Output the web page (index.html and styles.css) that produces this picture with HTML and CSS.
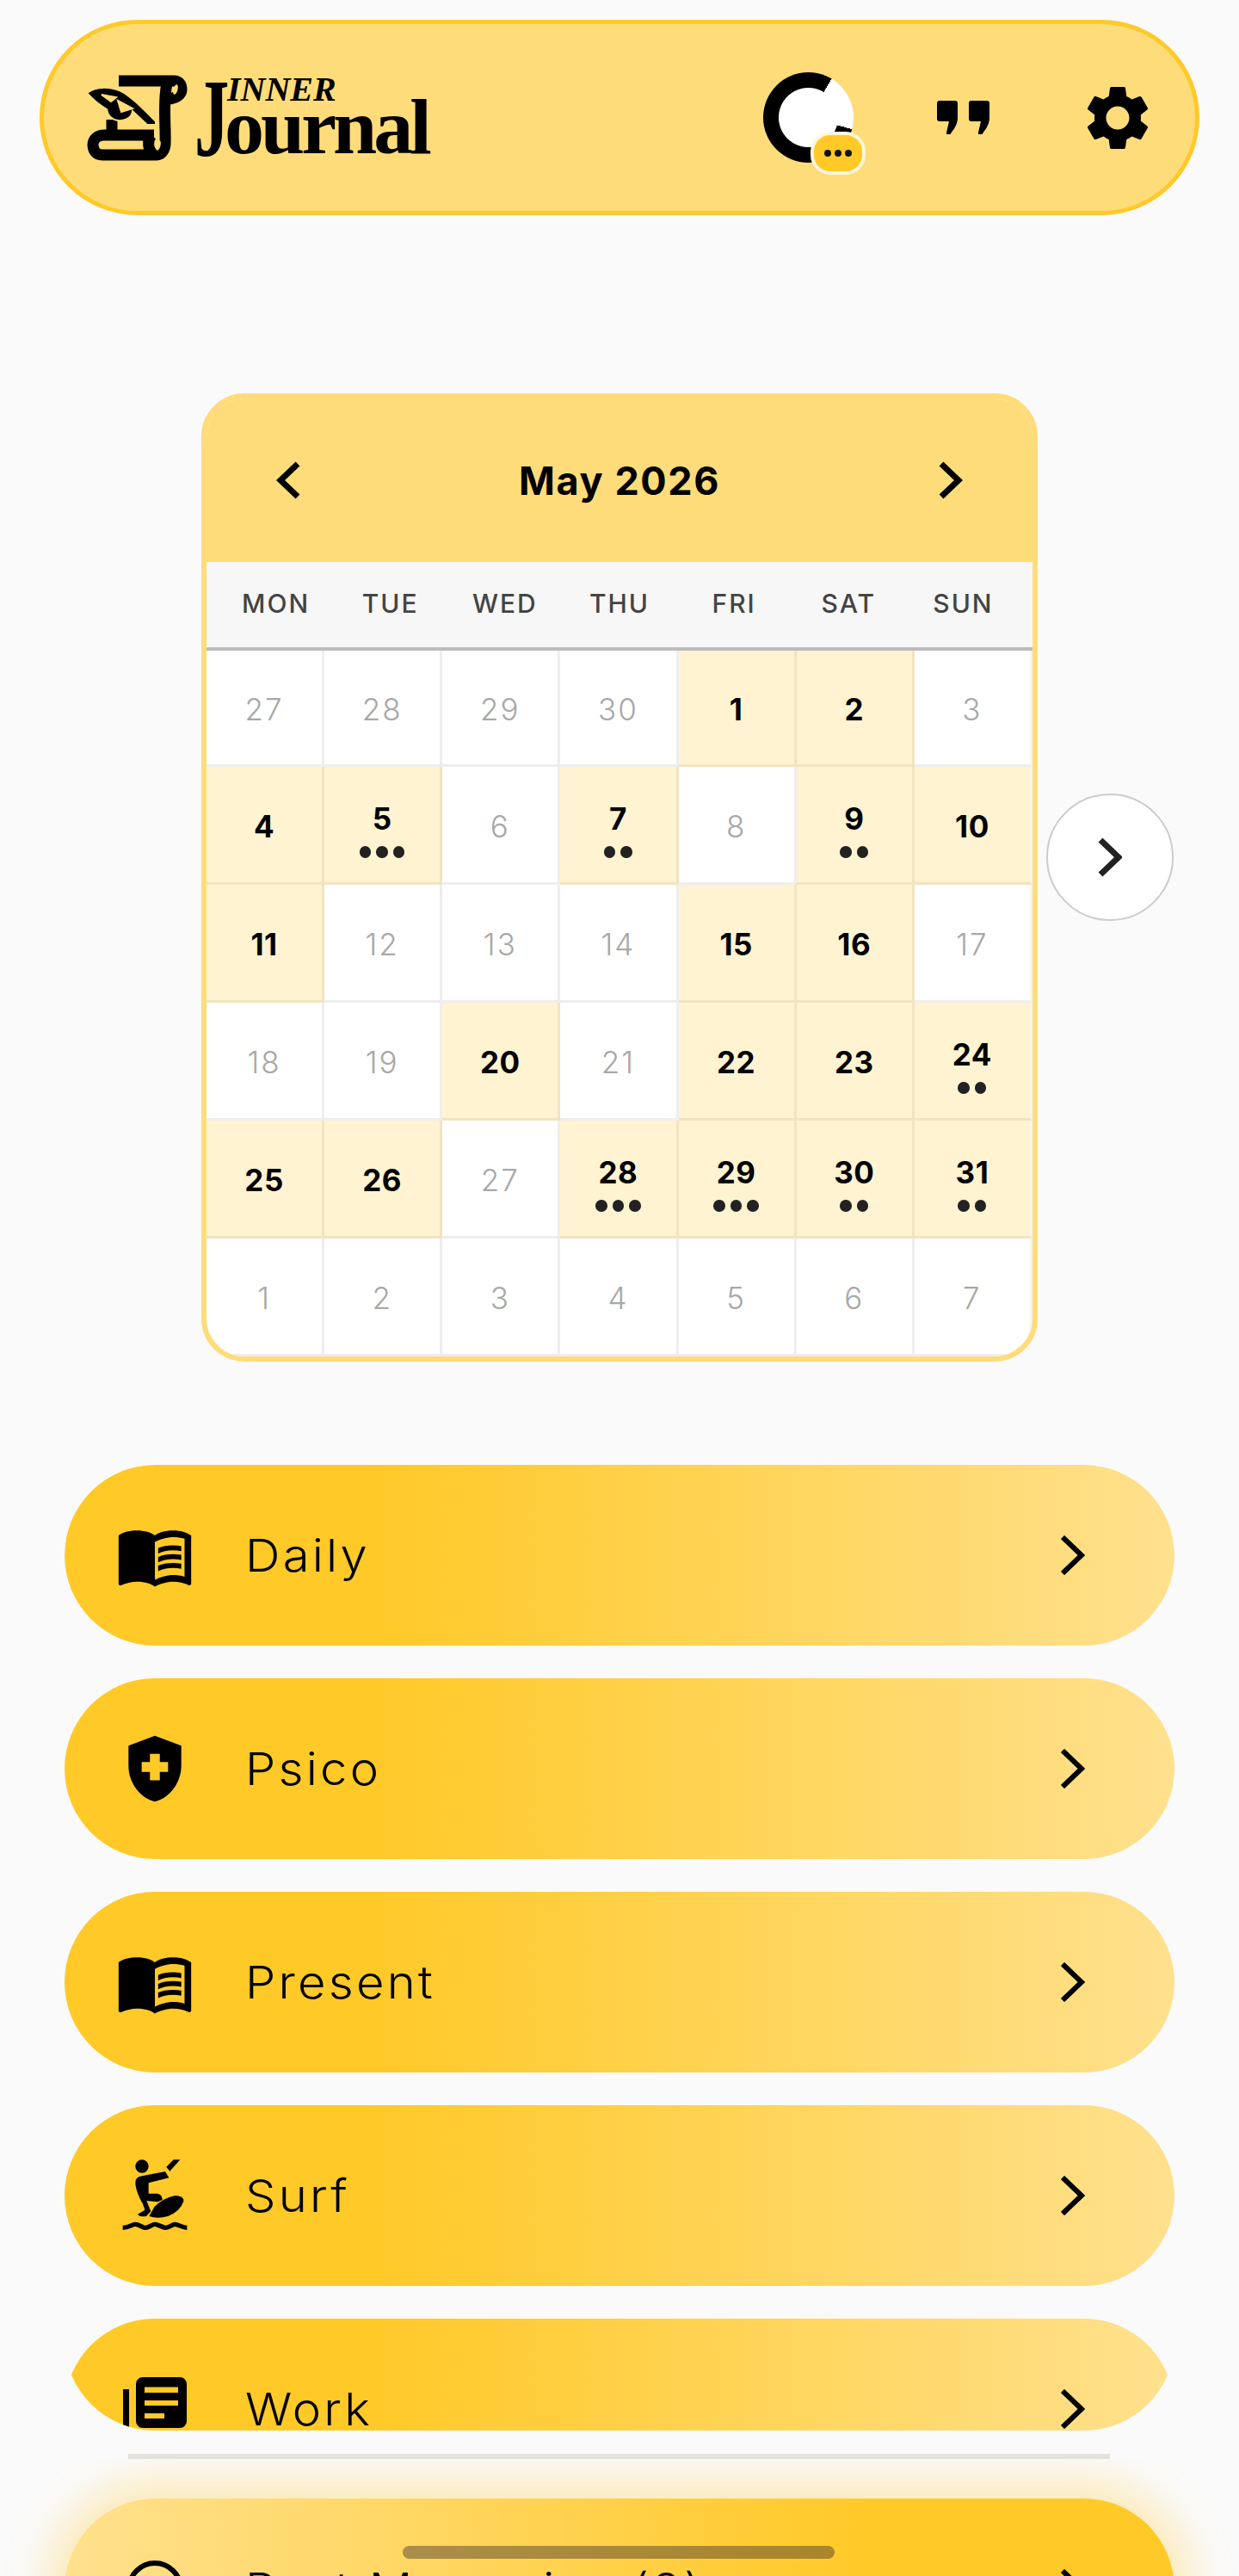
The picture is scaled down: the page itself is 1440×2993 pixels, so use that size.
FILE: index.html
```html
<!DOCTYPE html>
<html lang="en-us">
<head>
    <title>Inner Journal</title>
    <meta name="viewport" content="width=device-width, initial-scale=1" />
    <link rel="stylesheet" href="styles.css">
</head>
<body>
    <header class="topBar">
        <div class="brand">
            <svg class="brandIcon" viewBox="0 0 130 115" aria-hidden="true">
                <g fill="none" stroke="#000" stroke-width="13">
                    <path d="M47 15 H111 C118 15 120 20 120 25 C120 31 114 35 105 36" />
                    <path d="M103 18 C98 40 102 70 101 89 C100 97 96 101 90 101 H28 C20 101 17 95 17 89 C17 83 22 78 30 78 H88" />
                    <path d="M85 78 C80 84 80 95 88 101" />
                    <path d="M39 60 V78" />
                </g>
                <ellipse cx="113" cy="25" rx="2.500" ry="6" fill="#ffdc7a" transform="rotate(15 113 25)" />
                <ellipse cx="93" cy="90" rx="2.500" ry="6" fill="#ffdc7a" transform="rotate(15 93 90)" />
                <path fill="#000" fill-rule="evenodd" stroke="#ffdc7a" stroke-width="2" d="M10 29 C22 20 38 22 50 27 C60 32 72 44 90 62 V66 H80 L63 50 C62 58 54 62 46 61 C38 60 34 54 33 48 C26 44 18 38 10 29 Z M27 31 L44 34 L38 39 Z M46 38 L63 47 L50 51 Z" />
            </svg>
            <div class="wordmark">
                <span class="wordJ">J</span>
                <div class="wordRest">
                    <span class="wordInner">INNER</span>
                    <span class="wordJournal">ournal</span>
                </div>
            </div>
        </div>
        <div class="topActions">
            <div class="progressRing">
                <div class="ringBadge"><i></i><i></i><i></i></div>
            </div>
            <svg class="quoteIcon" viewBox="0 0 61 39" aria-hidden="true">
                <path d="M0 3 a3 3 0 0 1 3-3 h18 a3 3 0 0 1 3 3 v17 c0 7-4 13-8 18 a2.500 2.500 0 0 1-5-1 l3-13 h-11 a3 3 0 0 1-3-3 z" />
                <path d="M37 3 a3 3 0 0 1 3-3 h18 a3 3 0 0 1 3 3 v17 c0 7-4 13-8 18 a2.500 2.500 0 0 1-5-1 l3-13 h-11 a3 3 0 0 1-3-3 z" />
            </svg>
            <svg class="gearIcon" viewBox="0 0 24 24" aria-hidden="true">
                <path d="M19.14 12.94c.04-.3.06-.61.06-.94 0-.32-.02-.64-.07-.94l2.03-1.58c.18-.14.23-.41.12-.61l-1.92-3.32c-.12-.22-.37-.29-.59-.22l-2.39.96c-.5-.38-1.03-.7-1.62-.94l-.36-2.54c-.04-.24-.24-.41-.48-.41h-3.84c-.24 0-.43.17-.47.41l-.36 2.54c-.59.24-1.13.57-1.62.94l-2.39-.96c-.22-.08-.47 0-.59.22L2.74 8.87c-.12.21-.08.47.12.61l2.03 1.58c-.05.3-.09.63-.09.94s.02.64.07.94l-2.03 1.58c-.18.14-.23.41-.12.61l1.92 3.32c.12.22.37.29.59.22l2.39-.96c.5.38 1.03.7 1.62.94l.36 2.54c.05.24.24.41.48.41h3.84c.24 0 .44-.17.47-.41l.36-2.54c.59-.24 1.13-.56 1.62-.94l2.39.96c.22.08.47 0 .59-.22l1.92-3.32c.12-.22.07-.47-.12-.61l-2.01-1.58zM12 15.6c-1.98 0-3.6-1.62-3.6-3.6s1.62-3.6 3.6-3.6 3.6 1.62 3.6 3.6-1.62 3.6-3.6 3.6z" />
            </svg>
        </div>
    </header>

    <section class="calendarWrap">
        <div class="calendar">
            <div class="calHead">
                <svg class="calArrow" viewBox="0 0 28 44" aria-hidden="true"><polyline points="25,3 5,22 25,41" /></svg>
                <h2 class="calTitle">May 2026</h2>
                <svg class="calArrow" viewBox="0 0 28 44" aria-hidden="true"><polyline points="3,3 23,22 3,41" /></svg>
            </div>
            <div class="weekDays">
                <span>MON</span><span>TUE</span><span>WED</span><span>THU</span><span>FRI</span><span>SAT</span><span>SUN</span>
            </div>
            <div class="calGrid">
                <div class="day">27</div>
                <div class="day">28</div>
                <div class="day">29</div>
                <div class="day">30</div>
                <div class="day filled">1</div>
                <div class="day filled">2</div>
                <div class="day">3</div>

                <div class="day filled">4</div>
                <div class="day filled hasDots">5<div class="dots"><i></i><i></i><i></i></div></div>
                <div class="day">6</div>
                <div class="day filled hasDots">7<div class="dots"><i></i><i></i></div></div>
                <div class="day">8</div>
                <div class="day filled hasDots">9<div class="dots"><i></i><i></i></div></div>
                <div class="day filled">10</div>

                <div class="day filled">11</div>
                <div class="day">12</div>
                <div class="day">13</div>
                <div class="day">14</div>
                <div class="day filled">15</div>
                <div class="day filled">16</div>
                <div class="day">17</div>

                <div class="day">18</div>
                <div class="day">19</div>
                <div class="day filled">20</div>
                <div class="day">21</div>
                <div class="day filled">22</div>
                <div class="day filled">23</div>
                <div class="day filled hasDots">24<div class="dots"><i></i><i></i></div></div>

                <div class="day filled">25</div>
                <div class="day filled">26</div>
                <div class="day">27</div>
                <div class="day filled hasDots">28<div class="dots"><i></i><i></i><i></i></div></div>
                <div class="day filled hasDots">29<div class="dots"><i></i><i></i><i></i></div></div>
                <div class="day filled hasDots">30<div class="dots"><i></i><i></i></div></div>
                <div class="day filled hasDots">31<div class="dots"><i></i><i></i></div></div>

                <div class="day">1</div>
                <div class="day">2</div>
                <div class="day">3</div>
                <div class="day">4</div>
                <div class="day">5</div>
                <div class="day">6</div>
                <div class="day">7</div>
            </div>
        </div>
        <button class="nextButton" aria-label="Next">
            <svg viewBox="0 0 28 46" aria-hidden="true"><polyline points="3,3 24,23 3,43" /></svg>
        </button>
    </section>

    <nav class="journalList">
        <a class="journalItem">
            <span class="itemIcon">
                <svg viewBox="0 0 24 24" aria-hidden="true">
                    <path d="M21 5c-1.110-.35-2.330-.5-3.500-.5-1.950 0-4.050.4-5.500 1.500-1.450-1.100-3.550-1.500-5.500-1.500S2.450 4.900 1 6v14.650c0 .25.25.5.5.5.1 0 .15-.05.25-.05C3.100 20.450 5.050 20 6.500 20c1.950 0 4.050.4 5.500 1.500 1.350-.85 3.800-1.500 5.500-1.500 1.650 0 3.350.3 4.750 1.050.1.05.15.05.25.05.25 0 .5-.25.5-.5V6c-.6-.45-1.250-.75-2-1zm0 13.500c-1.100-.35-2.300-.5-3.500-.5-1.700 0-4.150.65-5.500 1.500V8c1.350-.85 3.800-1.500 5.500-1.500 1.200 0 2.400.15 3.500.5v11.500z" />
                    <path d="M17.500 10.500c.88 0 1.730.09 2.500.26V9.240c-.79-.15-1.640-.24-2.500-.24-1.700 0-3.240.29-4.500.83v1.660c1.130-.64 2.700-.99 4.500-.99zM13 12.490v1.660c1.130-.64 2.700-.99 4.500-.99.88 0 1.730.09 2.500.26V11.900c-.79-.15-1.640-.24-2.500-.24-1.700 0-3.240.3-4.500.83zM17.500 14.330c-1.700 0-3.240.29-4.500.83v1.660c1.130-.64 2.700-.99 4.500-.99.88 0 1.730.09 2.500.26v-1.520c-.79-.16-1.640-.24-2.500-.24z" />
                </svg>
            </span>
            <span class="itemLabel">Daily</span>
            <svg class="itemArrow" viewBox="0 0 28 46" aria-hidden="true"><polyline points="2,2 24,23 2,44" /></svg>
        </a>
        <a class="journalItem">
            <span class="itemIcon">
                <svg viewBox="0 0 24 24" aria-hidden="true">
                    <path d="M10.500 13H8v-3h2.500V7.500h3V10H16v3h-2.500v2.500h-3V13zM12 2L4 5v6.090c0 5.050 3.410 9.760 8 10.910 4.590-1.150 8-5.860 8-10.910V5l-8-3z" />
                </svg>
            </span>
            <span class="itemLabel">Psico</span>
            <svg class="itemArrow" viewBox="0 0 28 46" aria-hidden="true"><polyline points="2,2 24,23 2,44" /></svg>
        </a>
        <a class="journalItem">
            <span class="itemIcon">
                <svg viewBox="0 0 24 24" aria-hidden="true">
                    <path d="M21 5c-1.110-.35-2.330-.5-3.500-.5-1.950 0-4.050.4-5.500 1.500-1.450-1.100-3.550-1.500-5.500-1.500S2.450 4.900 1 6v14.650c0 .25.25.5.5.5.1 0 .15-.05.25-.05C3.100 20.450 5.050 20 6.500 20c1.950 0 4.050.4 5.500 1.500 1.350-.85 3.800-1.500 5.500-1.500 1.650 0 3.350.3 4.750 1.050.1.05.15.05.25.05.25 0 .5-.25.5-.5V6c-.6-.45-1.250-.75-2-1zm0 13.500c-1.100-.35-2.300-.5-3.500-.5-1.700 0-4.150.65-5.500 1.500V8c1.350-.85 3.800-1.500 5.500-1.500 1.200 0 2.400.15 3.500.5v11.500z" />
                    <path d="M17.500 10.500c.88 0 1.730.09 2.500.26V9.240c-.79-.15-1.640-.24-2.500-.24-1.700 0-3.240.29-4.500.83v1.660c1.130-.64 2.700-.99 4.500-.99zM13 12.490v1.660c1.130-.64 2.700-.99 4.500-.99.88 0 1.730.09 2.500.26V11.900c-.79-.15-1.640-.24-2.500-.24-1.700 0-3.240.3-4.500.83zM17.500 14.330c-1.700 0-3.240.29-4.500.83v1.660c1.130-.64 2.700-.99 4.500-.99.88 0 1.730.09 2.500.26v-1.520c-.79-.16-1.640-.24-2.500-.24z" />
                </svg>
            </span>
            <span class="itemLabel">Present</span>
            <svg class="itemArrow" viewBox="0 0 28 46" aria-hidden="true"><polyline points="2,2 24,23 2,44" /></svg>
        </a>
        <a class="journalItem">
            <span class="itemIcon">
                <svg class="surfIcon" viewBox="0 0 360 300" aria-hidden="true">
                    <circle cx="135" cy="48" r="23" />
                    <path d="M220 50 L245 25 H268 L232 65 Z" />
                    <path d="M216 66 L229 88 L158 106 V143 H188 Q206 146 206 165 L190 172 L148 168 L135 175 Q112 130 112 105 Q112 85 135 82 Z" />
                    <path d="M135 170 L150 166 L166 205 L150 222 Q128 226 120 215 L145 200 Z" />
                    <path d="M178 190 Q205 160 250 150 Q282 150 280 170 Q268 205 225 222 Q190 232 160 222 Z" />
                    <path fill="none" stroke="#000" stroke-width="16" d="M68 262 C90 262 100 250 112 250 C125 250 135 262 146 262 C160 262 170 250 180 250 C192 250 205 262 218 262 C230 262 240 250 250 250 C262 250 275 262 292 262" />
                </svg>
            </span>
            <span class="itemLabel">Surf</span>
            <svg class="itemArrow" viewBox="0 0 28 46" aria-hidden="true"><polyline points="2,2 24,23 2,44" /></svg>
        </a>
        <a class="journalItem">
            <span class="itemIcon">
                <svg viewBox="0 0 92 92" aria-hidden="true">
                    <rect x="9" y="23" width="7" height="50" />
                    <path fill-rule="evenodd" d="M32 9 H75 a8 8 0 0 1 8 8 V60 a8 8 0 0 1-8 8 H32 a8 8 0 0 1-8-8 V17 a8 8 0 0 1 8-8 Z M34 20.500 V27 H73 V20.500 Z M34 36 V42 H73 V36 Z M34 51 V57 H57 V51 Z" />
                </svg>
            </span>
            <span class="itemLabel">Work</span>
            <svg class="itemArrow" viewBox="0 0 28 46" aria-hidden="true"><polyline points="2,2 24,23 2,44" /></svg>
        </a>
    </nav>

    <div class="listDivider"></div>

    <div class="pinnedArea">
        <a class="journalItem pinnedItem">
            <span class="itemIcon">
                <svg viewBox="0 0 92 92" aria-hidden="true">
                    <circle cx="46" cy="46" r="30" fill="none" stroke="#000" stroke-width="6" />
                </svg>
            </span>
            <span class="itemLabel">Past Memories (2)</span>
            <svg class="itemArrow" viewBox="0 0 28 46" aria-hidden="true"><polyline points="2,2 24,23 2,44" /></svg>
        </a>
    </div>

    <div class="homeBar"></div>
</body>
</html>
```

FILE: styles.css
```css
html, body {
    margin: 0;
    height: 2993px;
    overflow: hidden;
}

body {
    position: relative;
    background-color: #fafafa;
    color: #000000;
    font-family: 'Inter', 'Liberation Sans', sans-serif;
}

/* top bar */
.topBar {
    box-sizing: border-box;
    height: 227px;
    margin: 23px 46px 0;
    padding: 0 45px 0 40px;
    display: flex;
    justify-content: space-between;
    align-items: center;
    background-color: #ffdc7a;
    border: 5px solid #ffc928;
    border-radius: 114px;
}

.brand {
    display: flex;
    align-items: center;
}

.brandIcon {
    width: 130px;
    height: 115px;
}

.wordmark {
    display: flex;
    align-items: flex-start;
    font-family: 'Liberation Serif', serif;
    font-weight: bold;
    height: 96px;
    margin-left: 5px;
}

.wordJ {
    font-size: 130px;
    line-height: 96px;
    transform: scaleX(0.62);
    transform-origin: left;
    width: 35px;
}

.wordRest {
    display: flex;
    flex-direction: column;
}

.wordInner {
    font-size: 40px;
    font-style: italic;
    line-height: 30px;
    margin-left: 3px;
}

.wordJournal {
    font-size: 92px;
    line-height: 56px;
    letter-spacing: -4px;
}

.topActions {
    display: flex;
    align-items: center;
}

.progressRing {
    position: relative;
    width: 105px;
    height: 105px;
    border-radius: 50%;
    background: radial-gradient(circle, #ffffff 0 34px, transparent 35px),
        conic-gradient(#000000 0 31deg, #ffffff 31deg 105deg, #000000 105deg);
}

.ringBadge {
    position: absolute;
    left: 55px;
    top: 69px;
    box-sizing: border-box;
    width: 64px;
    height: 50px;
    display: flex;
    justify-content: center;
    align-items: center;
    gap: 4px;
    background-color: #ffc928;
    border: 4px solid #fff6dc;
    border-radius: 23px;
}

.ringBadge i {
    width: 8px;
    height: 8px;
    border-radius: 50%;
    background-color: #111111;
}

.quoteIcon {
    width: 61px;
    height: 39px;
    margin-left: 97px;
}

.gearIcon {
    width: 90px;
    height: 90px;
    margin-left: 104px;
}

/* calendar */
.calendarWrap {
    position: relative;
    width: 972px;
    margin: 207px auto 0;
}

.calendar {
    box-sizing: border-box;
    border: 6px solid #ffdc7a;
    border-radius: 50px;
    overflow: hidden;
    background-color: #ffffff;
}

.calHead {
    height: 190px;
    padding: 0 81px;
    display: flex;
    justify-content: space-between;
    align-items: center;
    background-color: #ffdc7a;
}

.calArrow {
    width: 28px;
    height: 44px;
    fill: none;
    stroke: #000000;
    stroke-width: 7;
}

.calTitle {
    margin: 0;
    font-size: 45px;
    font-weight: 700;
    letter-spacing: 1.600px;
}

.weekDays {
    box-sizing: border-box;
    height: 103px;
    padding: 0 14px 4px;
    display: grid;
    grid-template-columns: repeat(7, 1fr);
    align-items: center;
    justify-items: center;
    background-color: #f7f7f7;
    border-bottom: 4px solid #bdbdbd;
    color: #444444;
    font-size: 30px;
    font-weight: 500;
    letter-spacing: 2px;
}

.calGrid {
    display: grid;
    grid-template-columns: repeat(7, 1fr);
    grid-template-rows: 135px repeat(5, 137px);
}

.day {
    box-sizing: border-box;
    display: flex;
    flex-direction: column;
    justify-content: center;
    align-items: center;
    padding-top: 4px;
    border-right: 3px solid #eeeeee;
    border-bottom: 3px solid #eeeeee;
    color: #a8a8a8;
    font-size: 35px;
    font-weight: 300;
    line-height: 36px;
    letter-spacing: 2px;
}

.day:nth-child(7n) {
    border-right-color: #f4f4f4;
}

.day.filled {
    background-color: #fff3d1;
    border-bottom-color: #f1e4bf;
    color: #000000;
    font-weight: 700;
    letter-spacing: 0.500px;
}

.day.filled:not(:nth-child(7n)) {
    border-right-color: #f1e4bf;
}

.day.hasDots {
    padding-top: 14px;
}

.dots {
    display: flex;
    gap: 6px;
    margin-top: 14px;
}

.dots i {
    width: 13.500px;
    height: 13.500px;
    border-radius: 50%;
    background-color: #222222;
}

.nextButton {
    position: absolute;
    left: calc(100% + 10px);
    top: 465px;
    width: 148px;
    height: 148px;
    padding: 0;
    display: flex;
    justify-content: center;
    align-items: center;
    background-color: #ffffff;
    border: 2px solid #cccccc;
    border-radius: 50%;
}

.nextButton svg {
    width: 28px;
    height: 46px;
    fill: none;
    stroke: #222222;
    stroke-width: 7;
}

/* journal list */
.journalList {
    height: 1122px;
    margin: 120px 75px 0;
    display: flex;
    flex-direction: column;
    gap: 38px;
    overflow: hidden;
    border-radius: 105px;
}

.journalItem {
    box-sizing: border-box;
    flex-shrink: 0;
    height: 210px;
    padding: 0 104px 0 45px;
    display: flex;
    align-items: center;
    background: linear-gradient(90deg, #ffc928 28%, #ffe18e 100%);
    border-radius: 105px;
}

.itemIcon {
    width: 120px;
    height: 120px;
    flex-shrink: 0;
    display: flex;
    justify-content: center;
    align-items: center;
}

.itemIcon svg {
    width: 92px;
    height: 92px;
}

.itemIcon .surfIcon {
    width: 120px;
    height: 100px;
}

/* inter is narrower than the wide geometric face in the design */
.itemLabel {
    margin-left: 45px;
    font-size: 52px;
    font-weight: 300;
    letter-spacing: 3px;
    transform: scaleX(1.08);
    transform-origin: left;
}

.itemArrow {
    width: 28px;
    height: 46px;
    margin-left: auto;
    fill: none;
    stroke: #000000;
    stroke-width: 6;
}

.listDivider {
    height: 6px;
    margin: 27px 150px 0 149px;
    background-color: #e3e2dc;
}

.pinnedArea {
    height: 136px;
    padding: 46px 75px 0;
    overflow: hidden;
}

.pinnedItem {
    background: linear-gradient(270deg, #ffc928 28%, #ffe18e 100%);
    box-shadow: 0 0 45px 22px rgba(255, 205, 70, 0.35);
}

.homeBar {
    position: absolute;
    left: 468px;
    top: 2958px;
    width: 502px;
    height: 15px;
    border-radius: 8px;
    background-color: rgba(50, 40, 40, 0.42);
}
```
